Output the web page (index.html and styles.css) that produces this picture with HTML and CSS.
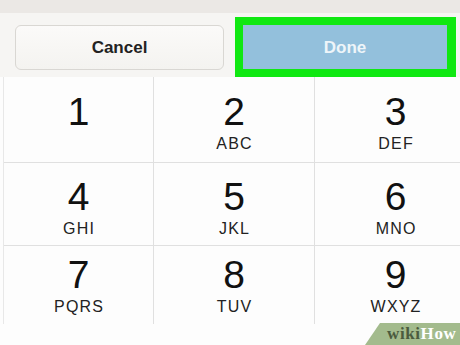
FILE: index.html
```html
<!DOCTYPE html>
<html>
<head>
<meta charset="utf-8">
<link rel="stylesheet" href="styles.css">
</head>
<body>
<div class="screen">
  <div class="topband"></div>
  <div class="actions">
    <div class="btn cancel">Cancel</div>
    <div class="done-frame"><div class="btn done">Done</div></div>
  </div>
  <div class="keypad">
    <div class="key r1"><div class="digit">1</div></div>
    <div class="key r1"><div class="digit">2</div><div class="letters">ABC</div></div>
    <div class="key r1 last"><div class="digit">3</div><div class="letters">DEF</div></div>
    <div class="key r2"><div class="digit">4</div><div class="letters">GHI</div></div>
    <div class="key r2"><div class="digit">5</div><div class="letters">JKL</div></div>
    <div class="key r2 last"><div class="digit">6</div><div class="letters">MNO</div></div>
    <div class="key r3"><div class="digit">7</div><div class="letters">PQRS</div></div>
    <div class="key r3"><div class="digit">8</div><div class="letters">TUV</div></div>
    <div class="key r3 last"><div class="digit">9</div><div class="letters">WXYZ</div></div>
  </div>
  <div class="wikihow"><span class="wiki">wiki</span><span class="how">How</span></div>
</div>
</body>
</html>
```
FILE: styles.css
```css
html, body {
  margin: 0;
  padding: 0;
  background: #fdfdfd;
}
.screen {
  position: relative;
  width: 460px;
  height: 345px;
  overflow: hidden;
  font-family: "Liberation Sans", Arial, sans-serif;
  background: #fdfdfd;
}
.topband {
  height: 13px;
  background: #ebe8e5;
}
.actions {
  height: 60px;
  padding-top: 4px;
  background: #f6f5f3;
  display: flex;
  align-items: flex-start;
  padding-left: 15px;
  gap: 11px;
}
.btn {
  display: flex;
  align-items: center;
  justify-content: center;
  font-weight: bold;
  font-size: 17px;
}
.cancel {
  margin-top: 8px;
  width: 207px;
  height: 43px;
  border: 1px solid #d9d7d3;
  border-radius: 6px;
  background: linear-gradient(#fbfaf9, #f4f3f0);
  color: #222;
}
.done-frame {
  width: 204px;
  height: 44px;
  border: 8px solid #10e812;
  border-right-width: 9px;
}
.done {
  height: 44px;
  padding-top: 1px;
  box-sizing: border-box;
  background: #93c0dc;
  color: #eef5f9;
}
.keypad {
  margin-left: 3px;
  border-left: 1px solid #e8e8e8;
  display: grid;
  grid-template-columns: 150px 161px 161px;
  grid-template-rows: 86px 83px 78px;
}
.key {
  border-right: 1px solid #e0e0e0;
  border-bottom: 1px solid #e0e0e0;
  display: flex;
  flex-direction: column;
  align-items: center;
  color: #111;
}
.key.last {
  border-right: none;
}
.key.r1 { padding-top: 15px; }
.key.r2 { padding-top: 14px; }
.key.r3 { padding-top: 9px; border-bottom: none; }
.digit {
  font-size: 39px;
  line-height: 40px;
  height: 40px;
}
.letters {
  margin-top: 4px;
  font-size: 16px;
  line-height: 16px;
  letter-spacing: 1.2px;
  padding-left: 1.2px;
  color: #222;
}
.wikihow {
  position: absolute;
  right: 0;
  bottom: 0;
  width: 95px;
  height: 22px;
  background: #a3bb8d;
  clip-path: polygon(15px 0, 100% 0, 100% 100%, 0 100%);
  font-family: "Liberation Serif", "Times New Roman", serif;
  font-weight: bold;
  font-size: 17px;
  line-height: 22px;
  letter-spacing: 0.6px;
  padding-left: 22px;
  box-sizing: border-box;
  white-space: nowrap;
}
.wiki { color: #4b5b3e; }
.how { color: #ffffff; }
```
